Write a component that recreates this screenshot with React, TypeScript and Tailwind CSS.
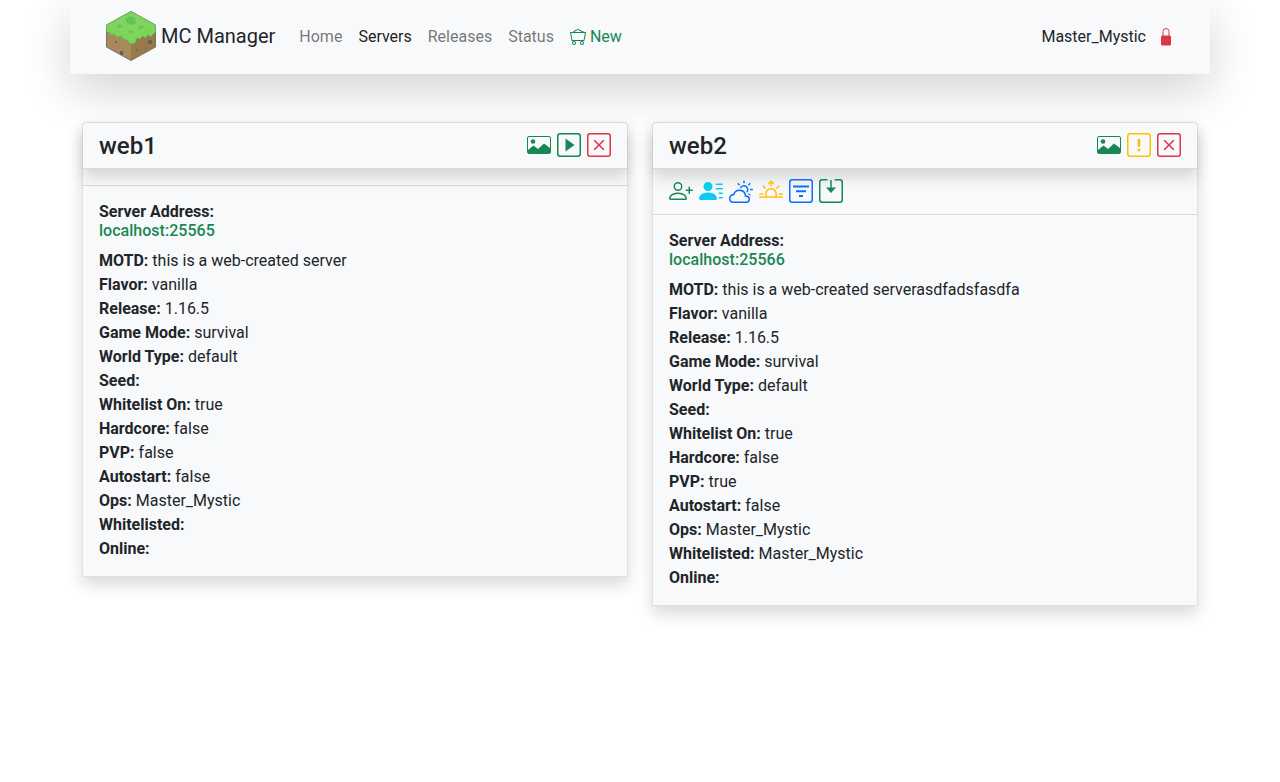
import {
  BsCloudSun,
  BsMinecartLoaded,
  BsPersonLinesFill,
  BsPersonPlus,
  BsSunrise,
  BsXSquare,
} from "react-icons/bs";

type Server = {
  name: string;
  port: number;
  motd: string;
  pvp: string;
  whitelisted: string;
  stopped: boolean;
};

const servers: Server[] = [
  { name: "web1", port: 25565, motd: "this is a web-created server", pvp: "false", whitelisted: "", stopped: true },
  { name: "web2", port: 25566, motd: "this is a web-created serverasdfadsfasdfa", pvp: "true", whitelisted: "Master_Mystic", stopped: false },
];

function GrassBlock() {
  return (
    <svg viewBox="0 0 50 50" className="h-[50px] w-[50px] shrink-0 -translate-y-px">
      <polygon points="25,0.500 49.500,14 49.500,36 25,49.500 0.500,36 0.500,14" fill="#a68a5b" stroke="#76705c" strokeWidth="1" />
      <polygon points="25,28 49,15 49,36 25,49" fill="#98794c" />
      <path
        d="M25 0.500 49.500 14V21L47 23 45 26 42 24 39 27 37 25 34 28 31 27 29 32 25 33 23 31 21 29 17 28 15 25 11 26 8 23 5 24 3 21 0.500 21V14Z"
        fill="#78d65b"
        stroke="#66b04c"
        strokeWidth="0.500"
      />
      <polygon points="25,2 48,14 25,26 2,14" fill="#7ed660" />
      <polygon points="19,8 24,5 30,7 28,10 31,12 25,14 21,12" fill="#68c24f" />
      <polygon points="31,16 36,14 39,16 34,19" fill="#6cc853" />
      <polygon points="10,15 14,13 17,16 13,18" fill="#6cc853" />
      <polygon points="22,20 26,19 28,21 24,23" fill="#6cc853" />
      <rect x="14" y="40" width="3" height="4" fill="#5f6167" />
      <rect x="42" y="29" width="4" height="4" fill="#5f6167" />
      <rect x="39" y="36" width="2" height="2" fill="#6a6a68" />
      <rect x="9" y="30" width="2" height="2" fill="#7f6640" />
      <rect x="30" y="38" width="2" height="2" fill="#7f6640" />
    </svg>
  );
}

function LockIcon() {
  return (
    <svg viewBox="0 0 12 18" className="h-[18px] w-3 text-[#dc3545]">
      <path d="M3 8V3.500a3 3 0 0 1 6 0V8" fill="none" stroke="currentColor" strokeWidth="1" />
      <rect x="1" y="7.500" width="10" height="10" rx="1.500" fill="currentColor" />
    </svg>
  );
}

function ImageIcon() {
  return (
    <svg viewBox="0 0 24 18" className="h-[18px] w-6 text-[#198754]">
      <rect x="0.500" y="0.500" width="23" height="17" rx="1.500" fill="none" stroke="currentColor" />
      <circle cx="6" cy="5.500" r="2.300" fill="currentColor" />
      <path d="M1 17V14L6.500 9.500 11 13 17 7.500 23 12V17Z" fill="currentColor" />
    </svg>
  );
}

function SquareFrame({ className, children }: { className: string; children: React.ReactNode }) {
  return (
    <svg viewBox="0 0 24 24" className={`h-6 w-6 ${className}`}>
      <rect x="0.750" y="0.750" width="22.500" height="22.500" rx="2.500" fill="none" stroke="currentColor" strokeWidth="1.500" />
      {children}
    </svg>
  );
}

function SaveIcon() {
  return (
    <svg viewBox="0 0 24 24" className="h-6 w-6 text-[#198754]">
      <path
        d="M8.500 0.750H3.250a2.500 2.500 0 0 0-2.500 2.500V20.750a2.500 2.500 0 0 0 2.500 2.500H20.750a2.500 2.500 0 0 0 2.500-2.500V3.250a2.500 2.500 0 0 0-2.500-2.500H15.500"
        fill="none"
        stroke="currentColor"
        strokeWidth="1.500"
      />
      <rect x="11.250" y="1" width="1.500" height="8" fill="currentColor" />
      <path d="M7 8.500H17L12 14Z" fill="currentColor" />
    </svg>
  );
}

function ServerCard({ server }: { server: Server }) {
  const rows: [string, string][] = [
    ["MOTD", server.motd],
    ["Flavor", "vanilla"],
    ["Release", "1.16.5"],
    ["Game Mode", "survival"],
    ["World Type", "default"],
    ["Seed", ""],
    ["Whitelist On", "true"],
    ["Hardcore", "false"],
    ["PVP", server.pvp],
    ["Autostart", "false"],
    ["Ops", "Master_Mystic"],
    ["Whitelisted", server.whitelisted],
    ["Online", ""],
  ];

  return (
    <div className="self-start rounded-t border border-black/10 bg-[#f8f9fa] shadow-[0_8px_16px_rgba(0,0,0,0.15)]">
      <div className="flex items-center justify-between rounded-t border-b border-black/[.125] px-4 pt-[8.5px] pb-2 shadow-[0_8px_16px_rgba(0,0,0,0.15)]">
        <h4 className="text-2xl leading-[1.2] font-medium">{server.name}</h4>
        <div className="mb-[1px] flex items-center gap-1.5">
          <ImageIcon />
          {server.stopped ? (
            <SquareFrame className="text-[#198754]">
              <path d="M8.500 5.500 17.500 12 8.500 18.500Z" fill="currentColor" />
            </SquareFrame>
          ) : (
            <SquareFrame className="text-[#ffc107]">
              <path d="M10.500 6H13.500L13 14H11Z" fill="currentColor" />
              <circle cx="12" cy="17" r="1.500" fill="currentColor" />
            </SquareFrame>
          )}
          <BsXSquare className="text-[#dc3545]" size={24} />
        </div>
      </div>
      <div className="flex gap-1.5 border-b border-black/[.125] px-4 py-2">
        {!server.stopped && (
          <div className="flex h-[29px] items-start gap-1.5 pt-[2px]">
            <BsPersonPlus className="text-[#198754]" size={24} />
            <BsPersonLinesFill className="text-[#0dcaf0]" size={24} />
            <BsCloudSun className="text-[#0d6efd]" size={24} />
            <BsSunrise className="text-[#ffc107]" size={24} />
            <SquareFrame className="text-[#0d6efd]">
              <rect x="4" y="6.500" width="16" height="2" fill="currentColor" />
              <rect x="7" y="11.250" width="10" height="2" fill="currentColor" />
              <rect x="10" y="16" width="4" height="2" fill="currentColor" />
            </SquareFrame>
            <SaveIcon />
          </div>
        )}
      </div>
      <div className="px-4 pt-4 pb-[15px]">
        <div className="mb-2 leading-[1.2]">
          <div className="font-bold">Server Address:</div>
          <div className="font-medium tracking-[0.02px] text-[#198754]">localhost:{server.port}</div>
        </div>
        {rows.map(([label, value]) => (
          <div key={label}>
            <span className="font-bold">{label}:</span> {value}
          </div>
        ))}
      </div>
    </div>
  );
}

export default function App() {
  return (
    <div className="min-h-[782px] bg-white font-['Roboto',sans-serif] text-base leading-6 text-[#212529]">
      <div className="mx-auto w-[1140px]">
        <nav className="flex h-[74px] items-center bg-[#f8f9fa] pr-[38px] pl-9 shadow-[0_16px_48px_rgba(0,0,0,0.175)]">
          <div className="mr-4 flex items-center gap-[5px] text-xl">
            <GrassBlock />
            <span className="-translate-y-px">MC Manager</span>
          </div>
          <div className="flex items-center text-black/55">
            <span className="px-2">Home</span>
            <span className="px-2 text-black/90">Servers</span>
            <span className="px-2">Releases</span>
            <span className="px-2">Status</span>
            <span className="flex items-center gap-1 px-2 text-[#198754]">
              <BsMinecartLoaded size={16} />
              New
            </span>
          </div>
          <div className="ml-auto flex items-center gap-[14px]">
            <span>Master_Mystic</span>
            <LockIcon />
          </div>
        </nav>
        <main className="mt-12 grid grid-cols-2 gap-x-6 px-3">
          {servers.map((server) => (
            <ServerCard key={server.name} server={server} />
          ))}
        </main>
      </div>
    </div>
  );
}
